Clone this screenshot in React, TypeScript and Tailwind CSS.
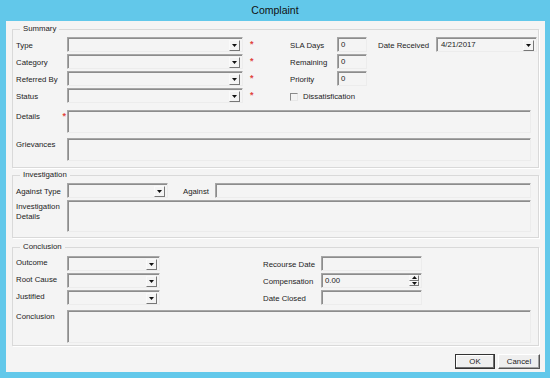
import React from 'react';

const field =
  'border border-t-[#a6a6a6] border-l-[#a6a6a6] border-r-[#ececec] border-b-[#ececec] shadow-[inset_1px_1px_0_#8c8c8c] bg-[#f4f4f4]';

function Combo({ w, value }: { w: string; value?: string }) {
  return (
    <div className={`${field} ${w} h-[15px] flex items-center justify-between`}>
      <span className="pl-[4px] leading-[13px]">{value}</span>
      <span className="h-[11px] w-[11px] mr-[2px] mt-[1px] flex items-center justify-center border border-t-[#fafafa] border-l-[#fafafa] border-r-[#777] border-b-[#777]">
        <svg width="5" height="3" viewBox="0 0 5 3">
          <path d="M0 0h5L2.5 3z" fill="#111" />
        </svg>
      </span>
    </div>
  );
}

function TextBox({ w, h = 'h-[15px]', value }: { w: string; h?: string; value?: string }) {
  return (
    <div className={`${field} ${w} ${h} pl-[3px] leading-[13px]`}>{value}</div>
  );
}

function Star() {
  return <span className="text-[#e0453f] text-[9px] leading-[8px] font-bold">*</span>;
}

function Group({ title, children, className }: { title: string; children: React.ReactNode; className?: string }) {
  return (
    <fieldset className={`border border-[#d9d9d9] shadow-[1px_1px_0_#fff] w-[527px] pl-[3px] ${className ?? ''}`}>
      <legend className="ml-[4px] px-[3px] leading-[10px]">{title}</legend>
      {children}
    </fieldset>
  );
}

export default function App() {
  return (
    <div className="w-[550px] h-[378px] bg-[#62c8ea] flex flex-col text-[7.8px] text-[#1c1c1c] font-['Liberation_Sans',Arial,sans-serif]">
      {/* Title bar */}
      <div className="h-[21px] flex items-center justify-center text-[10.5px] text-[#111]">Complaint</div>

      {/* Client area */}
      <div className="mx-[6px] w-[539px] h-[351px] bg-[#f4f4f4] pl-[6px] pt-[3px] flex flex-col">
        {/* Summary */}
        <Group title="Summary" className="pt-[3px] pb-[6px]">
          <div className="flex">
            <div className="w-[274px] flex flex-col gap-[2px]">
              {['Type', 'Category', 'Referred By', 'Status'].map((l) => (
                <div key={l} className="flex items-start h-[15px]">
                  <span className="w-[51px] pt-[4px] leading-[10px]">{l}</span>
                  <Combo w="w-[176px]" />
                  <span className="ml-[7px] mt-[2px]"><Star /></span>
                </div>
              ))}
            </div>
            <div className="w-[88px] flex flex-col gap-[2px]">
              {[
                ['SLA Days', '0'],
                ['Remaining', '0'],
                ['Priority', '0'],
              ].map(([l, v]) => (
                <div key={l} className="flex items-start h-[15px]">
                  <span className="w-[47px] pt-[4px] leading-[10px]">{l}</span>
                  <TextBox w="w-[30px]" value={v} />
                </div>
              ))}
              <div className="flex items-center h-[15px] pt-[2px]">
                <span className="w-[8px] h-[8px] border border-t-[#8a8a8a] border-l-[#8a8a8a] border-r-[#e8e8e8] border-b-[#e8e8e8] bg-[#f4f4f4]" />
                <span className="ml-[5px]">Dissatisfication</span>
              </div>
            </div>
            <div className="flex items-start h-[15px]">
              <span className="w-[58px] pt-[4px] leading-[10px]">Date Received</span>
              <Combo w="w-[101px]" value="4/21/2017" />
            </div>
          </div>

          <div className="flex items-start mt-[7px]">
            <span className="w-[51px] flex justify-between pr-[1px] leading-[10px] pt-[2px]">
              Details
              <Star />
            </span>
            <TextBox w="w-[464px]" h="h-[23px]" />
          </div>
          <div className="flex items-start mt-[5px]">
            <span className="w-[51px] leading-[10px] pt-[2px]">Grievances</span>
            <TextBox w="w-[464px]" h="h-[23px]" />
          </div>
        </Group>

        {/* Investigation */}
        <Group title="Investigation" className="mt-[2px] pt-[3px] pb-[5px]">
          <div className="flex items-start h-[15px]">
            <span className="w-[51px] pt-[4px] leading-[10px]">Against Type</span>
            <Combo w="w-[101px]" />
            <span className="ml-[15px] w-[32px] pt-[4px] leading-[10px]">Against</span>
            <TextBox w="w-[316px]" />
          </div>
          <div className="flex items-start mt-[2px]">
            <span className="w-[51px] leading-[10px] pt-[2px]">
              Investigation
              <br />
              Details
            </span>
            <TextBox w="w-[464px]" h="h-[32px]" />
          </div>
        </Group>

        {/* Conclusion */}
        <Group title="Conclusion" className="mt-[4px] pt-[4px] pb-[2px]">
          <div className="flex">
            <div className="w-[247px] flex flex-col gap-[2px]">
              {['Outcome', 'Root Cause', 'Justified'].map((l) => (
                <div key={l} className="flex items-start h-[15px]">
                  <span className="w-[51px] pt-[2px] leading-[10px]">{l}</span>
                  <Combo w="w-[93px]" />
                </div>
              ))}
            </div>
            <div className="flex flex-col gap-[2px]">
              <div className="flex items-start h-[15px]">
                <span className="w-[58px] pt-[4px] leading-[10px]">Recourse Date</span>
                <TextBox w="w-[101px]" />
              </div>
              <div className="flex items-start h-[15px]">
                <span className="w-[58px] pt-[4px] leading-[10px]">Compensation</span>
                <div className={`${field} w-[101px] h-[15px] flex items-center justify-between`}>
                  <span className="pl-[3px] leading-[13px]">0.00</span>
                  <span className="flex flex-col mr-[2px] w-[10px] h-[11px]">
                    <span className="flex-1 flex items-center justify-center border border-t-[#fafafa] border-l-[#fafafa] border-r-[#777] border-b-[#777]">
                      <svg width="5" height="3" viewBox="0 0 5 3"><path d="M0 3h5L2.5 0z" fill="#111" /></svg>
                    </span>
                    <span className="flex-1 flex items-center justify-center border border-t-[#fafafa] border-l-[#fafafa] border-r-[#777] border-b-[#777]">
                      <svg width="5" height="3" viewBox="0 0 5 3"><path d="M0 0h5L2.5 3z" fill="#111" /></svg>
                    </span>
                  </span>
                </div>
              </div>
              <div className="flex items-start h-[15px]">
                <span className="w-[58px] pt-[4px] leading-[10px]">Date Closed</span>
                <TextBox w="w-[101px]" />
              </div>
            </div>
          </div>
          <div className="flex items-start mt-[5px]">
            <span className="w-[51px] leading-[10px] pt-[2px]">Conclusion</span>
            <TextBox w="w-[464px]" h="h-[33px]" />
          </div>
        </Group>

        {/* Buttons */}
        <div className="flex justify-end gap-[3px] pr-[5px] mt-[8px]">
          <button className="w-[40px] h-[15px] border border-[#333] shadow-[inset_-1px_-1px_0_#6d6d6d,inset_1px_1px_0_#fff] bg-[#efefef] leading-[13px]">
            OK
          </button>
          <button className="w-[42px] h-[15px] border border-t-[#fff] border-l-[#fff] border-r-[#555] border-b-[#555] shadow-[inset_-1px_-1px_0_#a0a0a0] bg-[#efefef] leading-[13px]">
            Cancel
          </button>
        </div>
      </div>
    </div>
  );
}
